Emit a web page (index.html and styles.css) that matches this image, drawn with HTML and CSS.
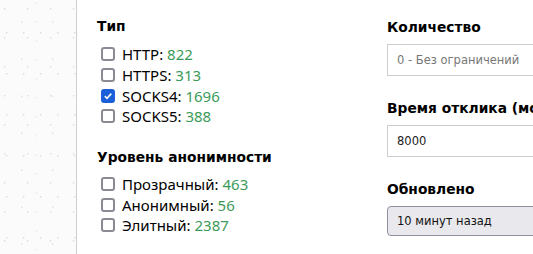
FILE: index.html
```html
<!DOCTYPE html>
<html>
<head>
<meta charset="utf-8">
<link rel="stylesheet" href="styles.css">
</head>
<body>
<div class="page">
  <aside class="side"></aside>
  <main class="content">
    <section class="col col-left">
      <h3 class="title">Тип</h3>
      <label class="row"><input type="checkbox"><span>HTTP: <b class="num">822</b></span></label>
      <label class="row"><input type="checkbox"><span>HTTPS: <b class="num">313</b></span></label>
      <label class="row"><input type="checkbox" checked><span>SOCKS4: <b class="num">1696</b></span></label>
      <label class="row"><input type="checkbox"><span>SOCKS5: <b class="num">388</b></span></label>
      <h3 class="title title-2">Уровень анонимности</h3>
      <label class="row"><input type="checkbox"><span>Прозрачный: <b class="num">463</b></span></label>
      <label class="row"><input type="checkbox"><span>Анонимный: <b class="num">56</b></span></label>
      <label class="row"><input type="checkbox"><span>Элитный: <b class="num">2387</b></span></label>
    </section>
    <section class="col col-right">
      <h3 class="title title-r1">Количество</h3>
      <input class="field" type="text" placeholder="0 - Без ограничений">
      <h3 class="title title-r">Время отклика (мс)</h3>
      <input class="field" type="text" value="8000">
      <h3 class="title title-r">Обновлено</h3>
      <div class="field field-ro">10 минут назад</div>
    </section>
  </main>
</div>
</body>
</html>
```
FILE: styles.css
```css
html, body {
  margin: 0;
  padding: 0;
  background: #fff;
  overflow: hidden;
}
.page {
  display: flex;
  width: 533px;
  height: 254px;
  overflow: hidden;
}
.side {
  width: 76px;
  flex: none;
  border-right: 1px solid #cfcfcf;
  background-color: #fbfbfb;
  background-image:
    radial-gradient(circle at 20% 30%, #d8d8d8 0.6px, transparent 1px),
    radial-gradient(circle at 70% 60%, #e2e2e2 0.6px, transparent 1px),
    radial-gradient(circle at 40% 80%, #dcdcdc 0.5px, transparent 1px),
    radial-gradient(circle at 85% 15%, #e6e6e6 0.5px, transparent 1px);
  background-size: 23px 29px, 31px 37px, 17px 41px, 43px 19px;
}
.content {
  display: flex;
  padding-left: 20px;
  font-family: "Noto Sans", "Open Sans", sans-serif;
  color: #000;
}
.col-left {
  width: 290px;
  flex: none;
}
.col-right {
  flex: none;
  width: 200px;
  display: flex;
  flex-direction: column;
}
.title {
  margin: 17px 0 9px;
  font-family: "DejaVu Sans", Verdana, sans-serif;
  font-weight: bold;
  font-size: 13.8px;
  line-height: 18px;
  color: #000;
}
.title-2 {
  margin-top: 21px;
  margin-bottom: 8px;
}
.title-r1 {
  margin-top: 18px;
  margin-bottom: 8px;
}
.title-r {
  margin-top: 23px;
  margin-bottom: 8px;
}
.row {
  display: flex;
  align-items: center;
  height: 20.7px;
  font-size: 15px;
  line-height: 20px;
}
.row input {
  appearance: none;
  -webkit-appearance: none;
  box-sizing: border-box;
  flex: none;
  width: 14px;
  height: 14px;
  margin: 0 7px 0 4px;
  border: 2px solid #8b8b95;
  border-radius: 3px;
  background: #fff;
}
.row input:checked {
  border-color: #1a5fd8;
  background: #1a5fd8 url("data:image/svg+xml,%3Csvg xmlns='http://www.w3.org/2000/svg' viewBox='0 0 10 10'%3E%3Cpath d='M1.8 5.2 L4 7.3 L8.3 2.6' fill='none' stroke='white' stroke-width='1.6'/%3E%3C/svg%3E") center / 10px 10px no-repeat;
}
.num {
  font-weight: normal;
  color: #3c9a58;
}
.field {
  box-sizing: border-box;
  width: 200px;
  height: 32px;
  margin: 0;
  padding: 0 0 0 9px;
  border: 1px solid #cdcdcd;
  border-radius: 0;
  font-family: "DejaVu Sans", Verdana, sans-serif;
  font-size: 11.5px;
  color: #222;
  background: #fff;
  outline: none;
  flex: none;
}
.field::placeholder {
  color: #777;
}
.field-ro {
  display: flex;
  align-items: center;
  height: 30px;
  background: #e9e9ed;
  border: 1px solid #8f8f9d;
  border-radius: 4px;
  color: #111;
}
```
